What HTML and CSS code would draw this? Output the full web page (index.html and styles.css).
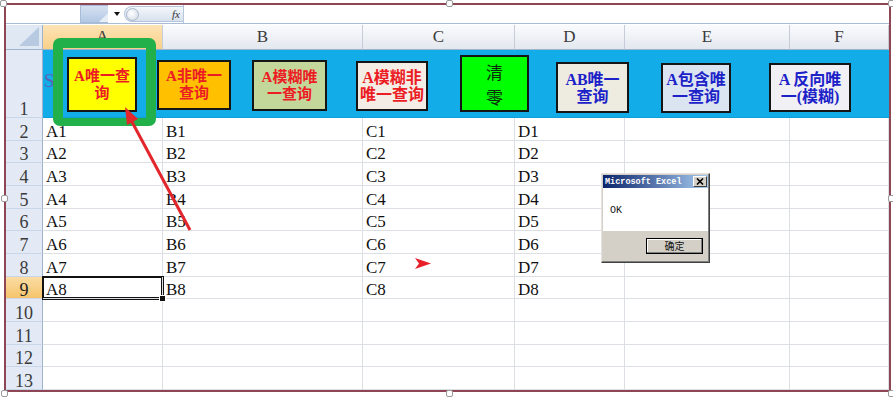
FILE: index.html
```html
<!DOCTYPE html>
<html>
<head>
  <title>Excel 查询按钮</title>
  <link rel="stylesheet" href="styles.css">
</head>
<body>
  <div class="page">
    <div class="frame">
      <div class="formula-bar">
        <div class="name-box"></div>
        <div class="name-drop"></div>
        <span class="drop-arrow"></span>
        <div class="fx-pill"><span class="fx-knob"></span><i class="fx">fx</i></div>
        <div class="formula-input"></div>
      </div>

      <div class="sheet">
        <div class="corner"></div>
        <div class="col-head active">A</div>
        <div class="col-head">B</div>
        <div class="col-head">C</div>
        <div class="col-head">D</div>
        <div class="col-head">E</div>
        <div class="col-head">F</div>

        <div class="row-head">1</div>
        <div class="band">
          <span class="band-text">S</span>
          <div class="btn btn-1 red">A唯一查<br>询</div>
          <div class="btn btn-2 red">A非唯一<br>查询</div>
          <div class="btn btn-3 red">A模糊唯<br>一查询</div>
          <div class="btn btn-4 red">A模糊非<br>唯一查询</div>
          <div class="btn btn-5"><span>清</span><span>零</span></div>
          <div class="btn btn-6 blue">AB唯一<br>查询</div>
          <div class="btn btn-7 blue">A包含唯<br>一查询</div>
          <div class="btn btn-8 blue">A 反向唯<br>一(模糊)</div>
        </div>

        <div class="row-head">2</div>
        <div class="cell">A1</div><div class="cell">B1</div><div class="cell">C1</div><div class="cell">D1</div><div class="cell"></div><div class="cell"></div>
        <div class="row-head">3</div>
        <div class="cell">A2</div><div class="cell">B2</div><div class="cell">C2</div><div class="cell">D2</div><div class="cell"></div><div class="cell"></div>
        <div class="row-head">4</div>
        <div class="cell">A3</div><div class="cell">B3</div><div class="cell">C3</div><div class="cell">D3</div><div class="cell"></div><div class="cell"></div>
        <div class="row-head">5</div>
        <div class="cell">A4</div><div class="cell">B4</div><div class="cell">C4</div><div class="cell">D4</div><div class="cell"></div><div class="cell"></div>
        <div class="row-head">6</div>
        <div class="cell">A5</div><div class="cell">B5</div><div class="cell">C5</div><div class="cell">D5</div><div class="cell"></div><div class="cell"></div>
        <div class="row-head">7</div>
        <div class="cell">A6</div><div class="cell">B6</div><div class="cell">C6</div><div class="cell">D6</div><div class="cell"></div><div class="cell"></div>
        <div class="row-head">8</div>
        <div class="cell">A7</div><div class="cell">B7</div><div class="cell">C7</div><div class="cell">D7</div><div class="cell"></div><div class="cell"></div>
        <div class="row-head active">9</div>
        <div class="cell sel">A8</div><div class="cell">B8</div><div class="cell">C8</div><div class="cell">D8</div><div class="cell"></div><div class="cell"></div>
        <div class="row-head">10</div>
        <div class="cell"></div><div class="cell"></div><div class="cell"></div><div class="cell"></div><div class="cell"></div><div class="cell"></div>
        <div class="row-head">11</div>
        <div class="cell"></div><div class="cell"></div><div class="cell"></div><div class="cell"></div><div class="cell"></div><div class="cell"></div>
        <div class="row-head">12</div>
        <div class="cell"></div><div class="cell"></div><div class="cell"></div><div class="cell"></div><div class="cell"></div><div class="cell"></div>
        <div class="row-head">13</div>
        <div class="cell"></div><div class="cell"></div><div class="cell"></div><div class="cell"></div><div class="cell"></div><div class="cell"></div>
      </div>
    </div>

    <!-- annotations drawn on top of the screenshot -->
    <div class="ring"></div>
    <svg class="marks" width="893" height="397">
      <line x1="190" y1="230" x2="131" y2="120" stroke="#e3262b" stroke-width="3"/>
      <polygon points="125,107 138,119 127,125" fill="#e3262b"/>
      <polygon points="415,258 431,263.5 415,269 419,263.5" fill="#e8202a"/>
    </svg>

    <div class="dialog">
      <div class="dialog-title">
        <span>Microsoft Excel</span>
        <span class="dialog-close">
          <svg width="8" height="7"><path d="M1 0.5 L7 6.5 M7 0.5 L1 6.5" stroke="#000" stroke-width="1.6"/></svg>
        </span>
      </div>
      <div class="dialog-body">OK</div>
      <div class="dialog-foot"><div class="dialog-btn">确定</div></div>
    </div>

    <span class="handle h-tl"></span>
    <span class="handle h-tm"></span>
    <span class="handle h-tr"></span>
    <span class="handle h-ml"></span>
    <span class="handle h-mr"></span>
    <span class="handle h-bl"></span>
    <span class="handle h-bm"></span>
    <span class="handle h-br"></span>
  </div>
</body>
</html>
```

FILE: styles.css
```css
body {
  margin: 0;
  background-color: #fff;
  font-family: "Liberation Serif", serif;
  color: #111;
}

.page {
  position: relative;
  width: 893px;
  height: 397px;
  overflow: hidden;
}

.frame {
  margin: 3px 0 0 4px;
  width: 883px;
  height: 385px;
  border: 2px solid #8e4654;
  overflow: hidden;
}

/* formula bar */
.formula-bar {
  display: flex;
  align-items: center;
  height: 18px;
  border-bottom: 1px solid #a9bdd8;
  margin-bottom: 1px;
}

.name-box {
  width: 74px;
  height: 100%;
  background-color: #fff;
}

.name-drop {
  position: relative;
  width: 27px;
  height: 16px;
  background: linear-gradient(#d5e1f1, #b3c8e5);
  border: 1px solid #a8bcd8;
  border-right: none;
}

.name-drop::after {
  content: "";
  position: absolute;
  right: 0;
  bottom: 0;
  border-left: 9px solid transparent;
  border-bottom: 9px solid #e8eef7;
}

.drop-arrow {
  margin-left: 6px;
  width: 0;
  height: 0;
  border-left: 3px solid transparent;
  border-right: 3px solid transparent;
  border-top: 4px solid #111;
}

.fx-pill {
  display: flex;
  align-items: center;
  justify-content: space-between;
  box-sizing: border-box;
  margin-left: 4px;
  width: 59px;
  height: 16px;
  padding: 0 3px 0 1px;
  border: 1px solid #b5c6dc;
  border-right: none;
  border-radius: 8px 0 0 8px;
  background: linear-gradient(#f5f8fc, #d7e1ee);
}

.fx-knob {
  width: 11px;
  height: 11px;
  border: 1px solid #a9b8cc;
  border-radius: 50%;
  background: radial-gradient(circle at 40% 40%, #fff, #cdd7e4);
}

.fx {
  font-size: 11px;
  color: #333;
}

.formula-input {
  flex: 1;
  height: 100%;
  border-left: 1px solid #b6c7dd;
  background-color: #fff;
}

/* sheet grid */
.sheet {
  display: grid;
  grid-template-columns: 37px 120px 200px 152px 110px 165px 99px;
  grid-template-rows: 25px 68px repeat(12, 22.67px);
}

.sheet > div {
  box-sizing: border-box;
}

.corner {
  position: relative;
  background-color: #dfe8f3;
  border-right: 1px solid #9fb3cc;
  border-bottom: 1px solid #9fb3cc;
}

.corner::after {
  content: "";
  position: absolute;
  right: 3px;
  bottom: 3px;
  border-left: 20px solid transparent;
  border-bottom: 19px solid #b8cae2;
}

.col-head {
  background: linear-gradient(#fafbfd, #e3e8ef);
  border-right: 1px solid #c6cdd8;
  border-bottom: 1px solid #9fb3cc;
  text-align: center;
  font-size: 17px;
  line-height: 24px;
  color: #3a3a3a;
}

.col-head.active {
  background: linear-gradient(#fde3b4, #f9d08a);
}

.row-head {
  display: flex;
  align-items: flex-end;
  justify-content: center;
  background-color: #e3eaf5;
  border-right: 1px solid #9fb3cc;
  border-bottom: 1px solid #c9d6e7;
  font-size: 18px;
  line-height: 16px;
  color: #3a3a3a;
}

.row-head.active {
  background: linear-gradient(#fbdca3, #f6c46c);
  color: #222;
}

.cell {
  display: flex;
  align-items: flex-end;
  padding-left: 3px;
  border-right: 1px solid #dcdfe4;
  border-bottom: 1px solid #dcdfe4;
  font-size: 17px;
  line-height: 16px;
}

.cell.sel {
  position: relative;
  z-index: 1;
  box-shadow: 0 0 0 1px #111, inset 0 0 0 1px #111;
}

.cell.sel::after {
  content: "";
  position: absolute;
  right: -4px;
  bottom: -4px;
  width: 5px;
  height: 5px;
  background-color: #111;
  border: 1px solid #fff;
}

/* row 1: blue band with the macro buttons */
.band {
  position: relative;
  grid-column: 2 / 8;
  display: flex;
  align-items: center;
  background-color: #12ade8;
  border-bottom: 1px solid #0f9fd6;
}

.band-text {
  padding: 0 0 6px 1px;
  font-size: 19px;
  color: #5b63b6;
}

.btn {
  position: absolute;
  display: flex;
  align-items: center;
  justify-content: center;
  box-sizing: border-box;
  border: 2px solid #151515;
  font-family: "Liberation Serif", "Noto Sans CJK SC", serif;
  font-weight: bold;
  font-size: 15px;
  line-height: 17px;
  text-align: center;
}

.red {
  color: #ec1c24;
}

.blue {
  color: #1c22c8;
}

.btn-1 { left: 24px; top: 7px; width: 70px; height: 55px; background-color: #ffff00; }
.btn-2 { left: 114px; top: 10px; width: 74px; height: 50px; background-color: #ffc000; }
.btn-3 { left: 209px; top: 10px; width: 75px; height: 51px; background-color: #c4d79b; }
.btn-4 { left: 313px; top: 11px; width: 72px; height: 50px; background-color: #f3ede6; font-size: 16px; }
.btn-6 { left: 513px; top: 12px; width: 73px; height: 51px; background-color: #eeece1; font-size: 16px; }
.btn-7 { left: 618px; top: 13px; width: 70px; height: 50px; background-color: #dbe5f1; font-size: 16px; }
.btn-8 { left: 726px; top: 13px; width: 82px; height: 49px; background-color: #f1f1f5; font-size: 16px; }

.btn-5 {
  left: 417px;
  top: 5px;
  width: 69px;
  height: 57px;
  flex-direction: column;
  gap: 8px;
  background-color: #00ff00;
  font-family: "Noto Sans CJK SC", sans-serif;
  font-weight: normal;
  font-size: 17px;
  line-height: 17px;
  color: #0c2a0c;
}

/* annotations */
.ring {
  position: absolute;
  left: 53px;
  top: 38px;
  width: 103px;
  height: 88px;
  box-sizing: border-box;
  border: 10px solid #22b04b;
  border-bottom-width: 8px;
  border-radius: 7px;
}

.marks {
  position: absolute;
  left: 0;
  top: 0;
}

/* message box */
.dialog {
  position: absolute;
  left: 601px;
  top: 173px;
  width: 109px;
  height: 90px;
  box-sizing: border-box;
  display: flex;
  flex-direction: column;
  padding: 1px;
  background-color: #d4d0c8;
  border: 1px solid;
  border-color: #e6e3de #404040 #404040 #e6e3de;
  box-shadow: inset -1px -1px #808080;
}

.dialog-title {
  display: flex;
  align-items: center;
  justify-content: space-between;
  height: 13px;
  padding: 0 1px 0 2px;
  background: linear-gradient(90deg, #0a246a, #a6caf0);
  font-family: "Liberation Mono", monospace;
  font-weight: bold;
  font-size: 8.5px;
  color: #fff;
}

.dialog-close {
  display: flex;
  align-items: center;
  justify-content: center;
  width: 12px;
  height: 9px;
  background-color: #d4d0c8;
  border: 1px solid;
  border-color: #fff #404040 #404040 #fff;
}

.dialog-body {
  display: flex;
  align-items: center;
  height: 43px;
  padding: 2px 0 0 7px;
  box-sizing: border-box;
  background-color: #fff;
  font-family: "Liberation Mono", monospace;
  font-size: 10px;
}

.dialog-foot {
  flex: 1;
  display: flex;
  align-items: center;
  justify-content: flex-end;
  padding-right: 5px;
}

.dialog-btn {
  width: 55px;
  height: 14px;
  border: 1px solid #000;
  box-shadow: inset -1px -1px #808080, inset 1px 1px #fff;
  font-family: "Noto Sans CJK SC", sans-serif;
  font-size: 10px;
  line-height: 14px;
  text-align: center;
}

/* selection handles of the picture */
.handle {
  position: absolute;
  width: 5px;
  height: 5px;
  background-color: #fff;
  border: 1px solid #9a9a9a;
  border-radius: 2px;
}

.h-tl { left: 0; top: 0; }
.h-tm { left: 446px; top: 0; }
.h-tr { left: 888px; top: 0; }
.h-ml { left: 1px; top: 195px; }
.h-mr { left: 888px; top: 195px; }
.h-bl { left: 1px; top: 390px; }
.h-bm { left: 446px; top: 390px; }
.h-br { left: 888px; top: 390px; }
```
